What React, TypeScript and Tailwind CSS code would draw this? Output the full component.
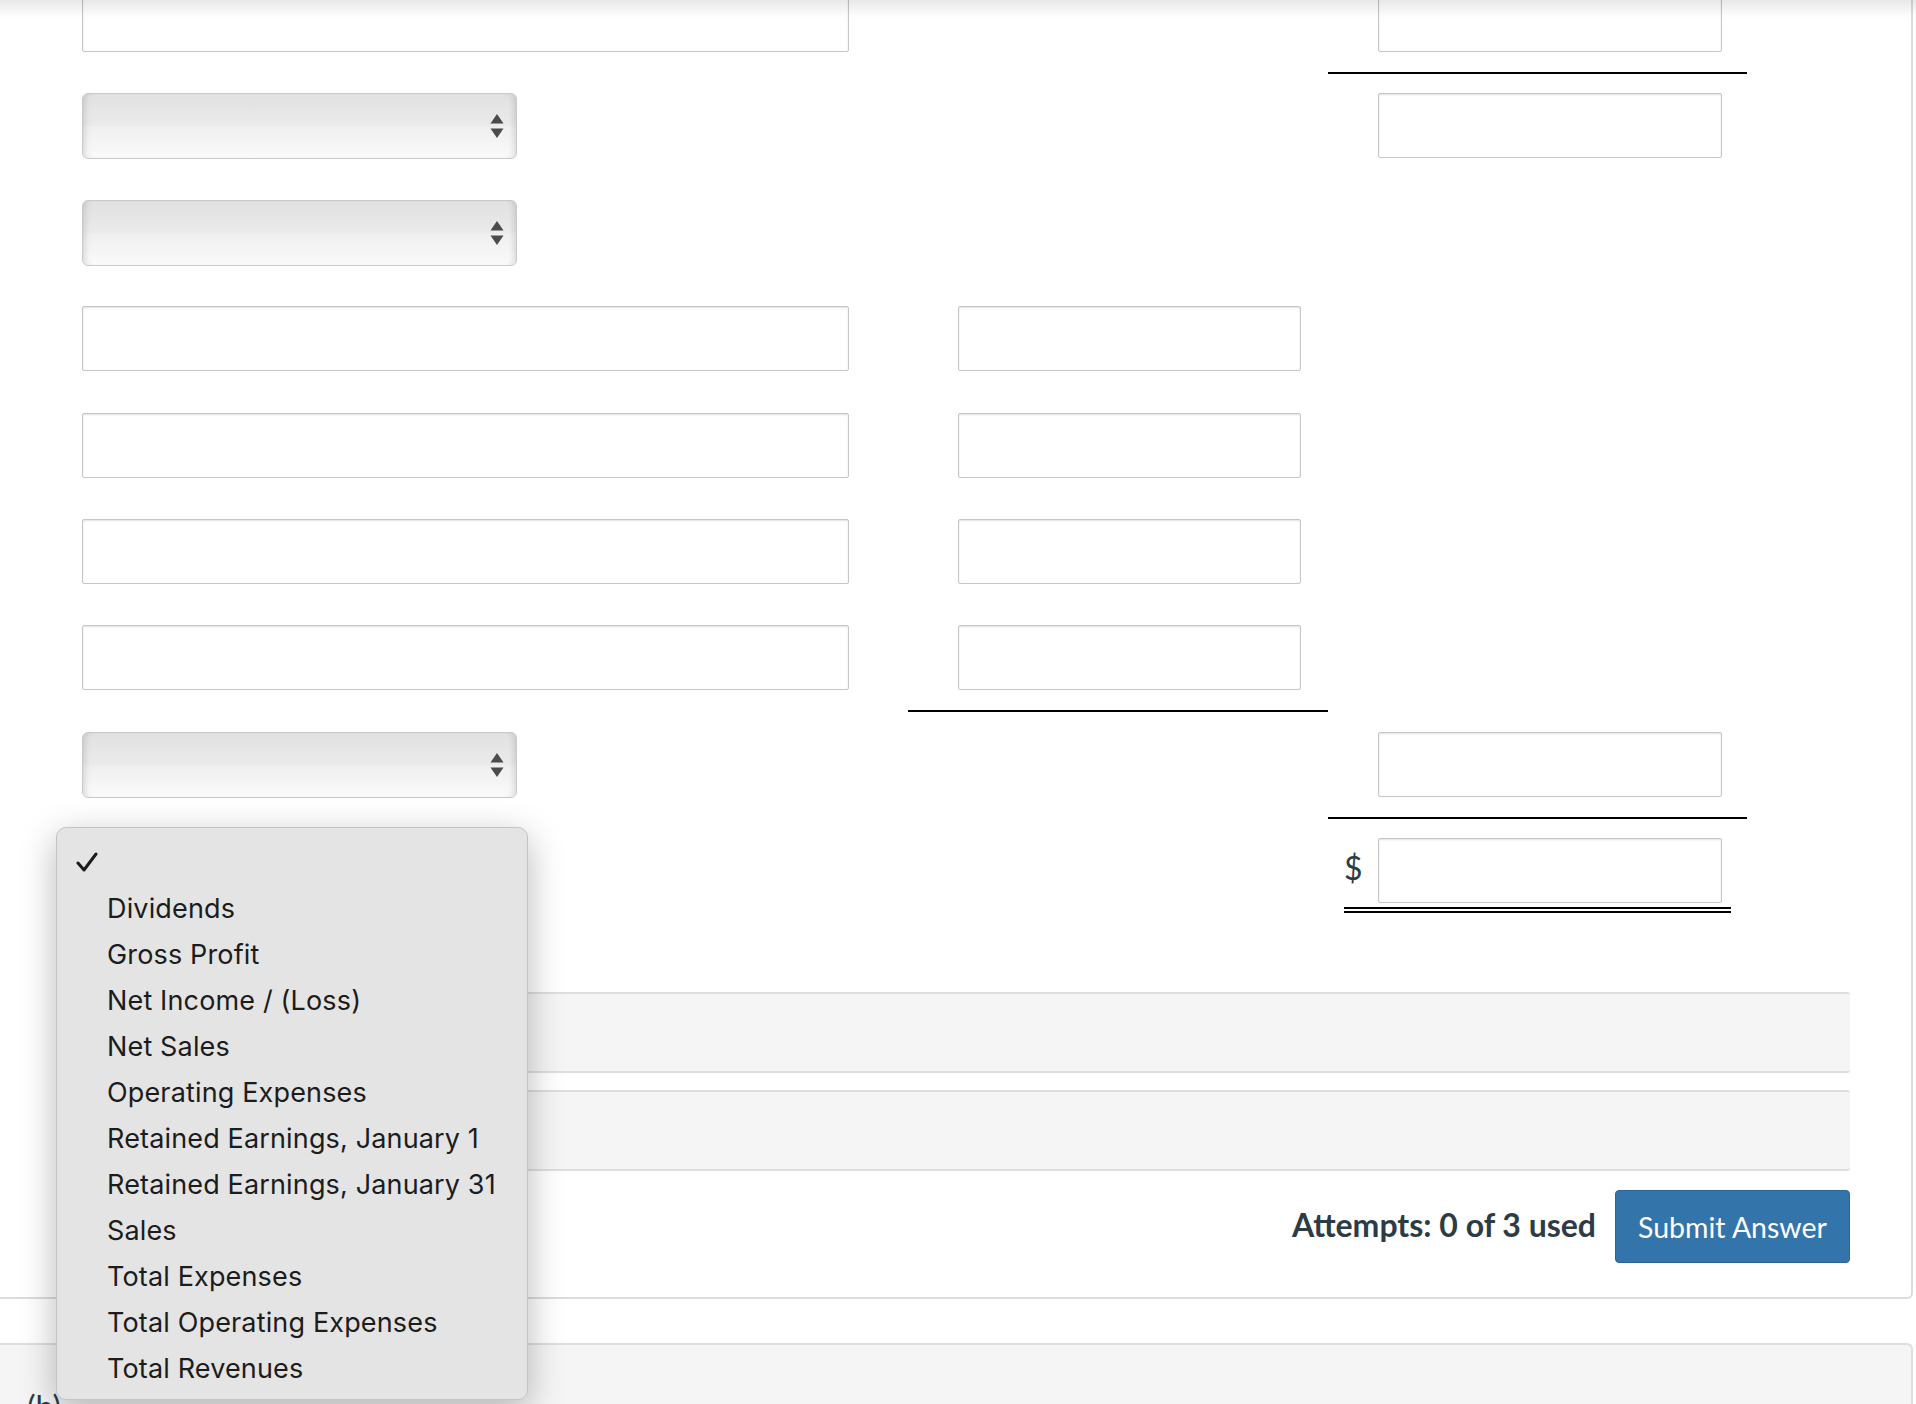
import React from "react";

function TextInput({ w }: { w: string }) {
  return (
    <div
      className={`${w} h-[65px] bg-white border border-[#c6c6c6] rounded-[2px] shadow-[inset_0_1px_2px_rgba(0,0,0,0.12)]`}
    />
  );
}

function SelectBox() {
  return (
    <div className="w-[435px] h-[66px] rounded-[6px] border-[1.5px] border-[#c9c9c9] bg-[linear-gradient(to_bottom,#e1e1e1,#eaeaea_48%,#efefef_52%,#fafafa)] shadow-[inset_7px_0_6px_-5px_rgba(0,0,0,0.13),inset_-7px_0_6px_-5px_rgba(0,0,0,0.13)] flex items-center justify-end pr-[12px]">
      <svg width="14" height="26" viewBox="0 0 14 26">
        <path d="M7 1 L13.5 10.5 L0.5 10.5 Z" fill="#4b4b4b" />
        <path d="M7 25 L13.5 15.5 L0.5 15.5 Z" fill="#4b4b4b" />
      </svg>
    </div>
  );
}

type Cell = "input" | "select" | "none";
type Row = {
  c1: Cell;
  c2: boolean;
  c2line?: boolean;
  c3: boolean;
  c3line?: boolean;
  dollar?: boolean;
};

const rows: Row[] = [
  { c1: "input", c2: false, c3: true, c3line: true },
  { c1: "select", c2: false, c3: true },
  { c1: "select", c2: false, c3: false },
  { c1: "input", c2: true, c3: false },
  { c1: "input", c2: true, c3: false },
  { c1: "input", c2: true, c3: false },
  { c1: "input", c2: true, c2line: true, c3: false },
  { c1: "select", c2: false, c3: true, c3line: true },
  { c1: "none", c2: false, c3: false, dollar: true },
];

const options = [
  "Dividends",
  "Gross Profit",
  "Net Income / (Loss)",
  "Net Sales",
  "Operating Expenses",
  "Retained Earnings, January 1",
  "Retained Earnings, January 31",
  "Sales",
  "Total Expenses",
  "Total Operating Expenses",
  "Total Revenues",
];

export default function App() {
  return (
    <div className="relative w-[1916px] h-[1404px] overflow-hidden bg-white font-['Lato','Liberation_Sans',sans-serif] text-[#2d3b45]">
      {/* main panel */}
      <div className="mr-[3px] border-r-2 border-b-2 border-[#dcdcdc] rounded-br-[6px] pb-[34px]">
        <div className="pl-[82px] mt-[-13px]">
          {rows.map((r, i) => (
            <div key={i} className="flex h-[106.375px]">
              <div className="w-[826px] shrink-0">
                {r.c1 === "input" && <TextInput w="w-[767px]" />}
                {r.c1 === "select" && <SelectBox />}
              </div>
              <div className="w-[420px] shrink-0">
                {r.c2 && (
                  <div className="pl-[50px]">
                    <TextInput w="w-[343px]" />
                  </div>
                )}
                {r.c2line && <div className="mt-[20px] h-[2px] bg-black" />}
              </div>
              <div className="w-[419px] shrink-0">
                {r.c3 && (
                  <div className="pl-[50px]">
                    <TextInput w="w-[344px]" />
                  </div>
                )}
                {r.c3line && <div className="mt-[20px] h-[2px] bg-black" />}
                {r.dollar && (
                  <div className="pl-[16px]">
                    <div className="flex items-center gap-[16px]">
                      <span className="w-[18px] text-[32px] leading-none text-[#2d3b45] -mt-[6px]">$</span>
                      <TextInput w="w-[344px]" />
                    </div>
                    <div className="mt-[4px] w-[387px] h-[6px] border-y-2 border-black" />
                  </div>
                )}
              </div>
            </div>
          ))}
        </div>

        <div className="pl-[82px] pr-[61px] mt-[48px] flex flex-col gap-[17px]">
          <div className="h-[81px] bg-[#f5f5f5] border-y-2 border-[#dedede] rounded-[3px]" />
          <div className="h-[81px] bg-[#f5f5f5] border-y-2 border-[#dedede] rounded-[3px]" />
        </div>

        <div className="pr-[61px] mt-[19px] flex items-center justify-end gap-[19px]">
          <span className="text-[32px] font-bold leading-none text-[#2d3b45] mt-[-4px]">
            Attempts: 0 of 3 used
          </span>
          <button className="w-[235px] h-[73px] rounded-[4px] bg-[#3374aa] border border-[#2a6496] text-white text-[28.5px] leading-none flex items-center justify-center">
            Submit Answer
          </button>
        </div>
      </div>

      {/* next panel */}
      <div className="mt-[44px] mr-[3px] h-[120px] bg-[#f5f5f5] border-t-2 border-r-2 border-[#dedede] rounded-tr-[6px] pl-[27px] pt-[46px]">
        <span className="text-[32px] leading-none text-[#2d3b45]">(b)</span>
      </div>

      {/* top shadow */}
      <div className="pointer-events-none absolute left-0 right-0 top-0 h-[18px] bg-[linear-gradient(to_bottom,rgba(0,0,0,0.09),rgba(0,0,0,0))]" />

      {/* open dropdown */}
      <div className="absolute left-[56px] top-[827px] w-[472px] h-[573px] rounded-[10px] border border-[#c4c4c4] bg-[#e4e4e4] shadow-[0_10px_36px_rgba(0,0,0,0.28)] pt-[11px] font-['Inter','Noto_Sans',sans-serif] text-[#1c1c1c]">
        <div className="h-[46px] flex items-center pl-[19px]">
          <svg width="22" height="22" viewBox="0 0 22 22">
            <path d="M2 12 L8 19 L20 3" fill="none" stroke="#1c1c1c" strokeWidth="3" strokeLinecap="round" strokeLinejoin="round" />
          </svg>
        </div>
        {options.map((o) => (
          <div key={o} className="h-[46.1px] flex items-center pl-[50px] text-[27px] tracking-[0.15px] leading-none">
            {o}
          </div>
        ))}
      </div>
    </div>
  );
}
